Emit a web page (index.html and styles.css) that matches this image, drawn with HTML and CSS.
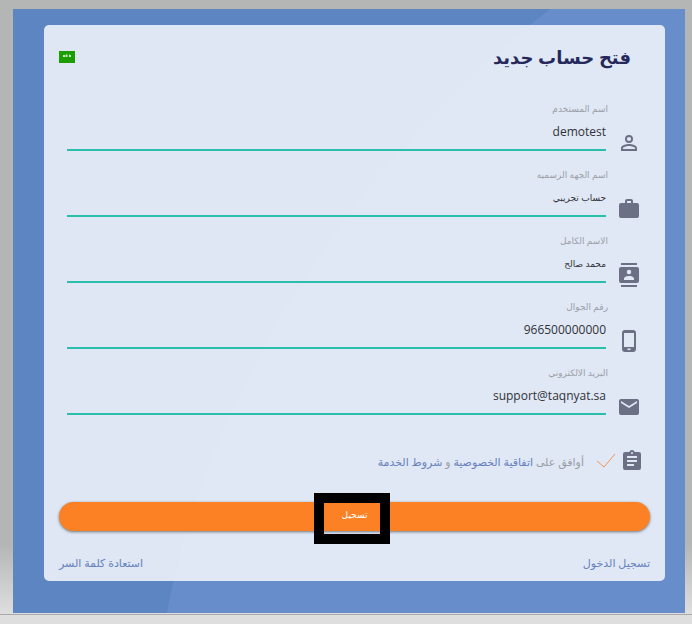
FILE: index.html
```html
<!DOCTYPE html>
<html lang="ar" dir="rtl">
<head>
<meta charset="utf-8">
<title>فتح حساب جديد</title>
<link rel="stylesheet" href="styles.css">
</head>
<body>
<main class="stage">
  <svg class="curve" viewBox="0 0 672 604" preserveAspectRatio="none" aria-hidden="true"><path d="M154 604C190 400 330 160 537 0H672V604Z"/></svg>
  <form class="card">
    <header class="head">
      <h1>فتح حساب جديد</h1>
      <button class="flag" type="button" aria-label="العربية"><svg viewBox="0 0 16 12"><path d="M4 4h2v2H4zM6.500 3.500h2V6h-2zM10 3.500h1V6h-1zM11 4h1v2h-1z"/></svg></button>
    </header>
    <div class="field">
      <svg class="icon" viewBox="0 0 24 24"><path d="M12 5.900a2.100 2.100 0 1 1 0 4.200 2.100 2.100 0 0 1 0-4.200m0 9c2.970 0 6.100 1.460 6.100 2.100v1.100H5.900V17c0-.640 3.130-2.100 6.100-2.100M12 4a4 4 0 1 0 0 8 4 4 0 0 0 0-8zm0 9c-2.670 0-8 1.340-8 4v3h16v-3c0-2.660-5.330-4-8-4z"/></svg>
      <div class="entry"><label for="user">اسم المستخدم</label><input id="user" type="text" value="demotest"></div>
    </div>
    <div class="field">
      <svg class="icon" viewBox="0 0 24 24"><path d="M20 6h-4V4a2 2 0 0 0-2-2h-4a2 2 0 0 0-2 2v2H4a2 2 0 0 0-2 2v11a2 2 0 0 0 2 2h16a2 2 0 0 0 2-2V8a2 2 0 0 0-2-2zm-6 0h-4V4h4v2z"/></svg>
      <div class="entry"><label for="org">اسم الجهه الرسميه</label><input class="arabic" id="org" type="text" value="حساب تجريبي"></div>
    </div>
    <div class="field">
      <svg class="icon" viewBox="0 0 24 24"><path d="M20 0H4v2h16V0zM4 24h16v-2H4v2zM20 4H4a2 2 0 0 0-2 2v12a2 2 0 0 0 2 2h16a2 2 0 0 0 2-2V6a2 2 0 0 0-2-2zm-8 2.750a2.250 2.250 0 1 1 0 4.500 2.250 2.250 0 0 1 0-4.500zM17 17H7v-1.500c0-1.670 3.330-2.500 5-2.500s5 .830 5 2.500V17z"/></svg>
      <div class="entry"><label for="name">الاسم الكامل</label><input class="arabic" id="name" type="text" value="محمد صالح"></div>
    </div>
    <div class="field">
      <svg class="icon" viewBox="0 0 24 24"><path d="M16 1H8a3 3 0 0 0-3 3v16a3 3 0 0 0 3 3h8a3 3 0 0 0 3-3V4a3 3 0 0 0-3-3zm-2.500 20h-3v-1.500h3V21zm3.500-3H7V4h10v14z"/></svg>
      <div class="entry"><label for="phone">رقم الجوال</label><input id="phone" type="tel" value="966500000000"></div>
    </div>
    <div class="field">
      <svg class="icon" viewBox="0 0 24 24"><path d="M20 4H4a2 2 0 0 0-2 2v12a2 2 0 0 0 2 2h16a2 2 0 0 0 2-2V6a2 2 0 0 0-2-2zm0 4-8 5-8-5V6l8 5 8-5v2z"/></svg>
      <div class="entry"><label for="mail">البريد الالكتروني</label><input id="mail" type="email" value="support@taqnyat.sa"></div>
    </div>
    <div class="terms">
      <svg class="icon" viewBox="0 0 24 24"><path d="M19 3h-4.200a3 3 0 0 0-5.600 0H5a2 2 0 0 0-2 2v14a2 2 0 0 0 2 2h14a2 2 0 0 0 2-2V5a2 2 0 0 0-2-2zm-7 0a1 1 0 1 1 0 2 1 1 0 0 1 0-2zm2 14H7v-2h7v2zm3-4H7v-2h10v2zm0-4H7V7h10v2z"/></svg>
      <span class="tick"><input id="agree" type="checkbox" checked><svg viewBox="0 0 20 16"><path d="M1 8l7 6L19 1"/></svg></span>
      <label for="agree">أوافق على <a href="#privacy">اتفاقية الخصوصية</a> و <a href="#terms">شروط الخدمة</a></label>
    </div>
    <div class="action">
      <button class="submit" type="submit">تسجيل</button>
      <span class="frame"></span>
    </div>
    <nav class="links"><a href="#login">تسجيل الدخول</a><a href="#recover">استعادة كلمة السر</a></nav>
  </form>
</main>
</body>
</html>
```
FILE: styles.css
```css
* { box-sizing: border-box; }
body {
  margin: 0;
  min-height: 100vh;
  padding: 9px 7px 11px 13px;
  background: linear-gradient(to top, #dedede 9px, #aaa 9px, #aaa 10px, #dedede 10px, #b4b6b5 80px);
  font-family: "Open Sans", "DejaVu Sans", sans-serif;
  font-size: 11px;
}
.stage {
  position: relative;
  padding: 16px 20px 32px 31px;
  background: #5c85c2;
}
.curve {
  position: absolute;
  inset: 0;
  width: 100%;
  height: 100%;
  fill: #678ecb;
}
.card {
  position: relative;
  padding: 16px 15px 8px;
  border-radius: 5px;
  background: rgba(255, 255, 255, 0.8);
}
.head {
  display: flex;
  justify-content: space-between;
  align-items: center;
  height: 32px;
  margin-bottom: 28px;
  padding-right: 19px;
}
h1 {
  margin: 0;
  color: #25285a;
  font-size: 18px;
  line-height: 32px;
}
.flag {
  width: 16px;
  height: 12px;
  padding: 0;
  border: 0;
  background: #1c9e03;
}
.flag svg { display: block; fill: #c4eabc; }
.field {
  display: flex;
  align-items: flex-end;
  gap: 11px;
  height: 50px;
  margin-bottom: 16px;
  padding: 0 9px 0 8px;
}
.icon {
  flex: none;
  width: 24px;
  height: 24px;
  fill: #6b7085;
}
.field .icon { margin-bottom: -4px; }
.entry {
  flex: 1;
  min-width: 0;
  display: flex;
  flex-direction: column;
}
.entry label {
  margin-right: -2px;
  color: #9b9fa8;
  font-size: 9px;
  line-height: 16px;
}
.entry input {
  width: 100%;
  height: 34px;
  padding: 0 0 4px;
  border: 0;
  border-bottom: 2px solid #2abfaa;
  outline: 0;
  background: none;
  color: #303238;
  font: 12px "Open Sans", "DejaVu Sans", sans-serif;
  text-align: right;
}
.entry .arabic { font-size: 9px; }
.terms {
  display: flex;
  align-items: center;
  height: 32px;
  margin: 30px 0 25px;
  padding-right: 6px;
  color: #999da6;
}
.tick {
  display: grid;
  width: 20px;
  height: 16px;
  margin: 0 8px 0 12px;
}
.tick > * { grid-area: 1 / 1; }
.tick input { appearance: none; margin: 0; }
.tick svg {
  fill: none;
  stroke: #f3954f;
  pointer-events: none;
}
.terms .icon { margin-left: -4px; }
a { color: #6581bd; text-decoration: none; }
.action { position: relative; }
.submit {
  display: block;
  width: 100%;
  height: 29px;
  padding: 0 0 4px;
  border: 0;
  border-radius: 15px;
  background: #fb8124;
  box-shadow: 0 1px 3px rgba(0, 0, 0, 0.5);
  color: #fff;
  font: 9px "DejaVu Sans", sans-serif;
}
.frame {
  position: absolute;
  top: -9px;
  left: calc(50% - 41px);
  width: 76px;
  height: 51px;
  border: 10px solid #000;
  pointer-events: none;
}
.links {
  display: flex;
  justify-content: space-between;
  margin-top: 21px;
  font-size: 11px;
  line-height: 21px;
}
```
